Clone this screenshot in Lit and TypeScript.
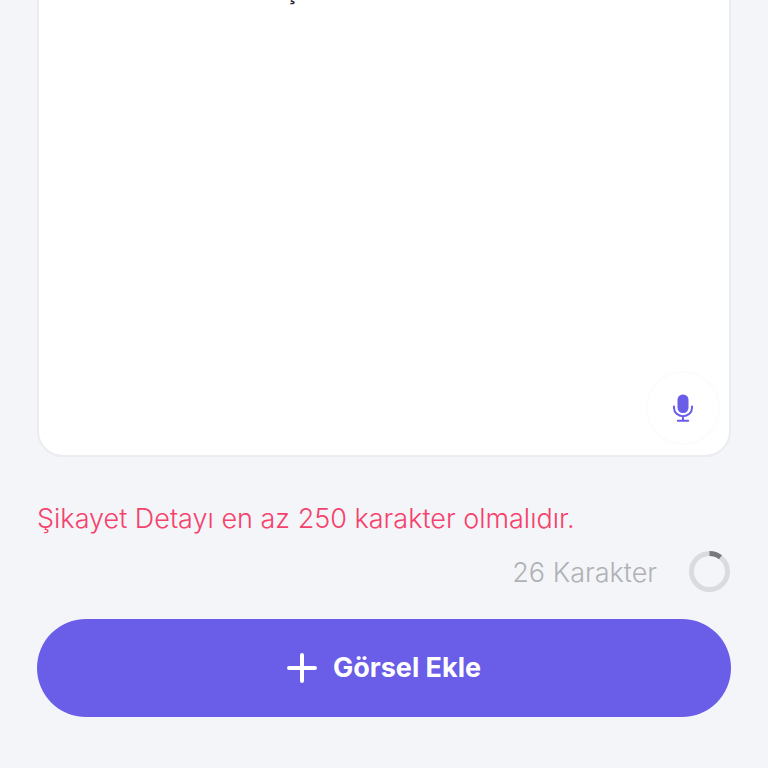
import { LitElement, html, css } from "lit";
import { customElement, state } from "lit/decorators.js";

const MIN_LENGTH = 250;

@customElement("app-root")
export class AppRoot extends LitElement {
  @state() private count = 26;

  static styles = css`
    :host {
      display: block;
      min-height: 100vh;
      box-sizing: border-box;
      overflow: hidden;
      padding: 0 37px 51px;
      background: #f3f5f9;
      font-family: Inter, "Noto Sans", sans-serif;
    }
    form {
      display: flex;
      flex-direction: column;
    }
    .field {
      position: relative;
      display: flex;
      margin-top: -44px;
    }
    textarea {
      flex: 1;
      min-width: 0;
      height: 501px;
      box-sizing: border-box;
      margin: 0;
      padding: 18px 24px 24px 246px;
      border: 2px solid #ebecf0;
      border-radius: 26px;
      background: #fff;
      color: #2b2b33;
      font: 600 24px/32px Inter, "Noto Sans", sans-serif;
      resize: none;
      outline: none;
      overflow: hidden;
    }
    .mic {
      position: absolute;
      right: 11px;
      bottom: 12px;
      width: 74px;
      height: 74px;
      display: grid;
      place-items: center;
      padding: 0;
      border: 2px solid #fcfcfd;
      border-radius: 50%;
      background: #fff;
      color: #6a5de8;
    }
    svg {
      display: block;
    }
    .error {
      margin: 44px 0 0;
      color: #f5426c;
      font-size: 27px;
      line-height: 36px;
      font-weight: 350;
    }
    .counter {
      display: flex;
      align-items: center;
      justify-content: flex-end;
      gap: 32px;
      margin-top: 14px;
      padding-right: 1px;
      color: #b0b1b5;
      font-size: 27px;
      line-height: 44px;
      font-weight: 350;
    }
    .counter svg {
      align-self: flex-start;
    }
    .add {
      display: flex;
      align-items: center;
      justify-content: center;
      gap: 16px;
      height: 98px;
      margin-top: 24px;
      padding: 0;
      border: 0;
      border-radius: 49px;
      background: #6a5de8;
      color: #fff;
      font: 700 27px/32px Inter, "Noto Sans", sans-serif;
    }
  `;

  private renderRing() {
    const length = 2 * Math.PI * 18;
    const filled = Math.min(1, this.count / MIN_LENGTH) * length;
    return html`
      <svg width="41" height="41" viewBox="0 0 41 41" fill="none" stroke-width="5" aria-hidden="true">
        <circle cx="20.5" cy="20.5" r="18" stroke="#dadbde" />
        <circle cx="20.5" cy="20.5" r="18" stroke="#77787e" transform="rotate(-90 20.5 20.5)"
          stroke-dasharray="${filled} ${length}" />
      </svg>
    `;
  }

  render() {
    return html`
      <form>
        <div class="field">
          <textarea aria-label="Şikayet Detayı" aria-describedby="detail-error" spellcheck="false" .value=${"ş"}></textarea>
          <button class="mic" type="button" aria-label="Sesle yaz">
            <svg width="20" height="28" viewBox="0 0 20 28" fill="none" stroke="currentColor" stroke-width="2" stroke-linecap="round">
              <rect x="4.5" y="0.5" width="11" height="18.5" rx="5.2" fill="currentColor" stroke="none" />
              <path d="M1 12.5v1.5a9 8.2 0 0 0 18 0v-1.5M10 22.2v4.3M4.8 26.7h10.4" />
            </svg>
          </button>
        </div>
        <p class="error" id="detail-error">Şikayet Detayı en az ${MIN_LENGTH} karakter olmalıdır.</p>
        <div class="counter"><span>${this.count} Karakter</span>${this.renderRing()}</div>
        <button class="add" type="button">
          <svg width="30" height="30" viewBox="0 0 30 30" fill="none" stroke="currentColor" stroke-width="4" stroke-linecap="round" aria-hidden="true">
            <path d="M15 2v26M2 15h26" />
          </svg>
          <span>Görsel Ekle</span>
        </button>
      </form>
    `;
  }
}
